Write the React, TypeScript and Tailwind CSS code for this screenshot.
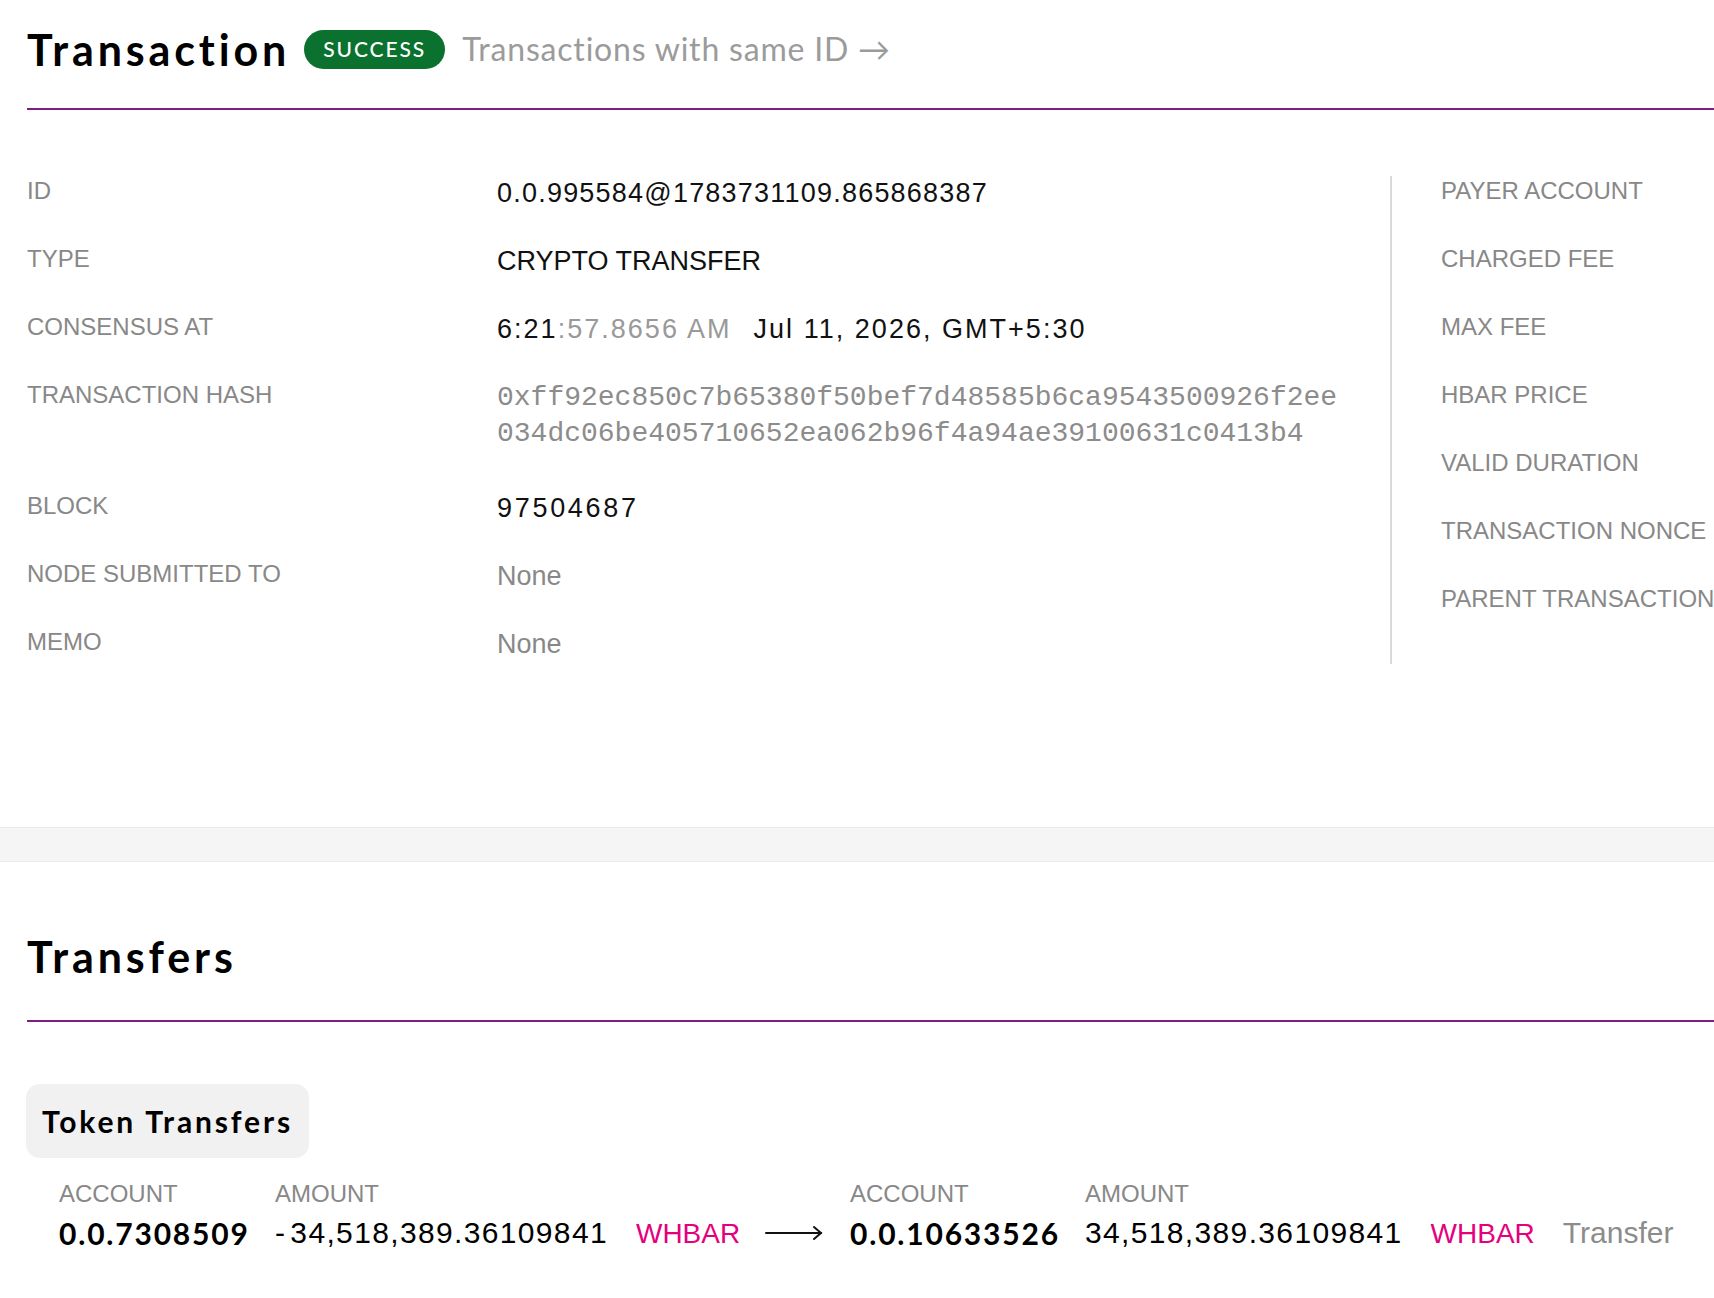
import React from 'react';

const heading = "font-['Lato',sans-serif]";
const label = 'text-[24px] leading-[30px] text-[#888888] uppercase whitespace-nowrap';
const value = 'text-[27px] leading-[34px] text-[#111111] whitespace-nowrap';
const num = 'tracking-[0.045em]';

const leftRows: { label: string; content: React.ReactNode; tall?: boolean }[] = [
  { label: 'ID', content: <span className={`${value} ${num}`}>0.0.995584@1783731109.865868387</span> },
  { label: 'Type', content: <span className={value}>CRYPTO TRANSFER</span> },
  {
    label: 'Consensus at',
    content: (
      <span className={`${value} tracking-[0.075em]`}>
        6:21<span className="text-[#999999]">:57.8656 AM</span>
        <span className="ml-[22px]">Jul 11, 2026, GMT+5:30</span>
      </span>
    ),
  },
  {
    label: 'Transaction Hash',
    tall: true,
    content: (
      <span className="block w-[848px] break-all font-['Liberation_Mono',monospace] text-[28px] leading-[36px] text-[#8c8c8c]">
        0xff92ec850c7b65380f50bef7d48585b6ca9543500926f2ee034dc06be405710652ea062b96f4a94ae39100631c0413b4
      </span>
    ),
  },
  { label: 'Block', content: <span className={`${value} tracking-[0.1em]`}>97504687</span> },
  { label: 'Node Submitted To', content: <span className={`${value} !text-[#888888]`}>None</span> },
  { label: 'Memo', content: <span className={`${value} !text-[#888888]`}>None</span> },
];

const rightRows = [
  'Payer Account',
  'Charged Fee',
  'Max Fee',
  'HBAR Price',
  'Valid Duration',
  'Transaction Nonce',
  'Parent Transaction',
];

function Arrow() {
  return (
    <svg width="58" height="16" viewBox="0 0 58 16" fill="none" stroke="#111" strokeWidth="2" strokeLinecap="round">
      <line x1="1" y1="8" x2="56" y2="8" />
      <polyline points="49,2 56,8 49,14" />
    </svg>
  );
}

export default function App() {
  return (
    <div className="min-h-[1298px] w-full overflow-hidden bg-white font-['Liberation_Sans',Arial,sans-serif]">
      {/* Transaction header */}
      <div className="ml-[27px] flex h-[110px] items-center border-b-2 border-[#7d1f80] pb-[10px]">
        <h1 className={`${heading} text-[43px] font-bold leading-[43px] tracking-[0.09em] text-black`}>Transaction</h1>
        <span className={`${heading} ml-[14px] flex h-[39px] w-[141px] items-center justify-center rounded-full bg-[#0a722e] text-[21px] font-medium tracking-[0.09em] text-white`}>
          SUCCESS
        </span>
        <span className={`${heading} ml-[17px] text-[32px] leading-[40px] tracking-[0.025em] text-[#9b9b9b]`}>
          Transactions with same ID →
        </span>
      </div>

      {/* Details */}
      <div className="flex items-start pt-[66px]">
        <div className="ml-[27px] w-[1363px] shrink-0">
          {leftRows.map((r) => (
            <div key={r.label} className={`flex items-start ${r.tall ? 'h-[111px]' : 'h-[68px]'}`}>
              <div className={`w-[470px] shrink-0 ${label}`}>{r.label}</div>
              <div>{r.content}</div>
            </div>
          ))}
        </div>
        <div className="h-[488px] w-[2px] shrink-0 bg-[#dadada]" />
        <div className="shrink-0 pl-[49px]">
          {rightRows.map((l) => (
            <div key={l} className={`h-[68px] ${label}`}>
              {l}
            </div>
          ))}
        </div>
      </div>

      {/* Separator band */}
      <div className="mt-[132px] h-[35px] border-y border-[#ebebeb] bg-[#f5f5f5]" />

      {/* Transfers */}
      <div className="ml-[27px] border-b-2 border-[#7d1f80] pb-[42px] pt-[74px]">
        <h2 className={`${heading} text-[43px] font-bold leading-[42px] tracking-[0.09em] text-black`}>Transfers</h2>
      </div>

      <div className="ml-[26px] mt-[62px] inline-flex h-[74px] items-center rounded-[14px] bg-[#f1f1f1] px-[16px]">
        <span className={`${heading} text-[30px] font-bold tracking-[0.095em] text-black`}>Token Transfers</span>
      </div>

      <div className="ml-[59px] mt-[21px] flex items-start">
        <div className="w-[216px] shrink-0">
          <div className={label}>Account</div>
          <div className={`${heading} mt-[6px] text-[30px] font-bold leading-[36px] tracking-[0.06em] text-black`}>0.0.7308509</div>
        </div>
        <div className="w-[490px] shrink-0">
          <div className={label}>Amount</div>
          <div className="mt-[6px] flex items-baseline gap-[28px] text-[30px] leading-[36px]">
            <span className={`text-black ${num}`}>
              -<span className="ml-[4px]">34,518,389.36109841</span>
            </span>
            <span className="text-[28px] text-[#e5007d]">WHBAR</span>
          </div>
        </div>
        <div className="flex h-[72px] w-[85px] shrink-0 items-end pb-[10px]">
          <Arrow />
        </div>
        <div className="w-[235px] shrink-0">
          <div className={label}>Account</div>
          <div className={`${heading} mt-[6px] text-[30px] font-bold leading-[36px] tracking-[0.06em] text-black`}>0.0.10633526</div>
        </div>
        <div className="shrink-0">
          <div className={label}>Amount</div>
          <div className="mt-[6px] flex items-baseline gap-[28px] whitespace-nowrap text-[30px] leading-[36px]">
            <span className={`text-black ${num}`}>34,518,389.36109841</span>
            <span className="text-[28px] text-[#e5007d]">WHBAR</span>
            <span className="text-[#8c8c8c]">Transfer</span>
          </div>
        </div>
      </div>
    </div>
  );
}
